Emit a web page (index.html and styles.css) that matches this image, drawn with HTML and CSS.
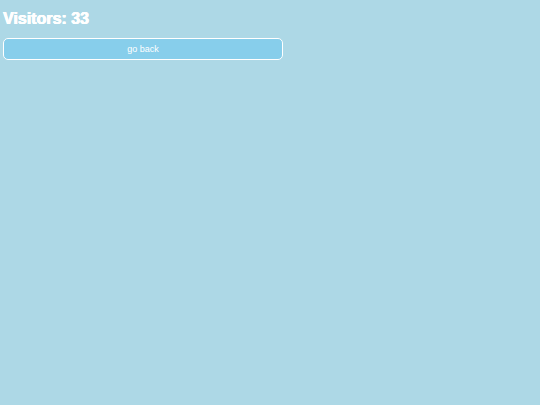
FILE: index.html
```html
<!DOCTYPE html>
<html>
<head>
<meta charset="utf-8">
<link rel="stylesheet" href="styles.css">
</head>
<body>
<div class="page">
  <h1 class="title">Visitors: 33</h1>
  <button class="back">go back</button>
</div>
</body>
</html>
```
FILE: styles.css
```css
html, body {
  margin: 0;
  padding: 0;
  background: #add8e6;
  height: 100%;
}
.page {
  padding: 3px;
  display: flex;
  flex-direction: column;
  align-items: flex-start;
  font-family: "Liberation Sans", Arial, sans-serif;
}
.title {
  margin: 7px 0 10px 0;
  font-size: 16px;
  line-height: 18px;
  font-weight: bold;
  letter-spacing: 0;
  color: #fff;
  text-shadow: 0.4px 0 0 #fff, -0.3px 0 0 #fff, 0 0.3px 0 #fff;
}
.back {
  width: 280px;
  height: 22px;
  background: #87ceeb;
  border: 1px solid #fff;
  border-radius: 5px;
  color: #fff;
  font-family: "Liberation Sans", Arial, sans-serif;
  font-size: 9px;
  padding: 0;
}
```
